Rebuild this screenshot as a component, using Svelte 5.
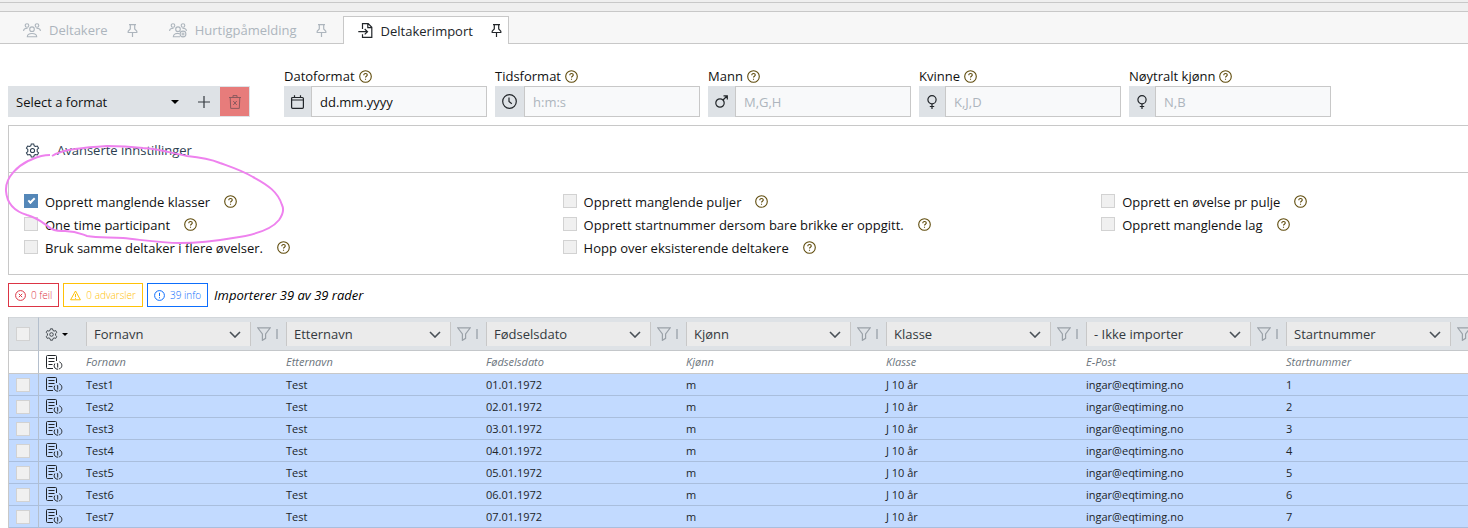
<script>
  const tabs = [
    { label: 'Deltakere', icon: 'people', active: false },
    { label: 'Hurtigpåmelding', icon: 'peoplePlus', active: false },
    { label: 'Deltakerimport', icon: 'import', active: true }
  ];

  const formats = [
    { id: 'date', label: 'Datoformat', icon: 'calendar', value: 'dd.mm.yyyy', hint: '' },
    { id: 'time', label: 'Tidsformat', icon: 'clock', value: '', hint: 'h:m:s' },
    { id: 'male', label: 'Mann', icon: 'male', value: '', hint: 'M,G,H' },
    { id: 'female', label: 'Kvinne', icon: 'female', value: '', hint: 'K,J,D' },
    { id: 'neutral', label: 'Nøytralt kjønn', icon: 'female', value: '', hint: 'N,B' }
  ];

  const optionColumns = [
    [
      { label: 'Opprett manglende klasser', checked: true },
      { label: 'One time participant', checked: false },
      { label: 'Bruk samme deltaker i flere øvelser.', checked: false }
    ],
    [
      { label: 'Opprett manglende puljer', checked: false },
      { label: 'Opprett startnummer dersom bare brikke er oppgitt.', checked: false },
      { label: 'Hopp over eksisterende deltakere', checked: false }
    ],
    [
      { label: 'Opprett en øvelse pr pulje', checked: false },
      { label: 'Opprett manglende lag', checked: false }
    ]
  ];

  const columns = [
    { select: 'Fornavn', source: 'Fornavn' },
    { select: 'Etternavn', source: 'Etternavn' },
    { select: 'Fødselsdato', source: 'Fødselsdato' },
    { select: 'Kjønn', source: 'Kjønn' },
    { select: 'Klasse', source: 'Klasse' },
    { select: '- Ikke importer', source: 'E-Post' },
    { select: 'Startnummer', source: 'Startnummer' },
    { select: '', source: '' }
  ];

  const rows = [1, 2, 3, 4, 5, 6, 7].map((n) => [
    `Test${n}`, 'Test', `0${n}.01.1972`, 'm', 'J 10 år', 'ingar@eqtiming.no', `${n}`, ''
  ]);
</script>

{#snippet pin()}
  <svg width="11" height="13" viewBox="0 0 11 13"><path d="M2 .7h7M3.300.7v4.200L1.200 7.200v1.300h8.600V7.200L7.700 4.900V.7M5.500 8.500V13" /></svg>
{/snippet}

{#snippet help()}
  <svg class="help" width="13" height="13" viewBox="0 0 13 13"><circle cx="6.500" cy="6.500" r="5.800" /><path d="M4.800 5.200c0-2.300 3.500-2.100 3.500-.1 0 1.200-1.800 1.200-1.800 2.500M6.500 8.700v1.100" /></svg>
{/snippet}

{#snippet gear(size)}
  <svg class="gear" width={size} height={size} viewBox="0 0 16 16"><circle cx="8" cy="8" r="2.200" /><path d="M6.700 1h2.600l.5 2 1.400.8 2-.6 1.300 2.300-1.500 1.400v2.200l1.500 1.400-1.300 2.300-2-.6-1.400.8-.5 2H6.700l-.5-2-1.400-.8-2 .6-1.300-2.300L3 9.100V6.900L1.500 5.500l1.300-2.300 2 .6L6.200 3z" /></svg>
{/snippet}

{#snippet report()}
  <svg class="report" width="17" height="15" viewBox="0 0 17 15">
    <path d="M7 13.500H1.500q-1 0-1-1v-11q0-1 1-1h8q1 0 1 1V6M2.500 3.500h6M2.500 6.500h6M2.500 9.500h4" />
    <path d="M8.800 8.600c-1.300 2-.6 4.900 2 5.500h1.400M13.300 6.800c3.300 1.300 3.500 6-.1 7.100M10.900 8.600h.8v4" />
  </svg>
{/snippet}

{#snippet icon(name)}
  {#if name === 'people' || name === 'peoplePlus'}
    <svg class="people" width="18" height="15" viewBox="0 0 18 15">
      <circle cx="4" cy="2.500" r="1.800" /><circle cx="14" cy="2.500" r="1.800" /><circle cx="9" cy="6.200" r="2.300" />
      <path d="M.6 8c0-2.200 1.700-2.700 4-2.700M17.400 8c0-2.200-1.700-2.700-4-2.700" />
      {#if name === 'people'}
        <path d="M4.300 13.800c0-4.400 9.400-4.400 9.400 0z" />
      {:else}
        <path d="M11 13.800H4.300c0-3 3.500-4 6.400-3.100" /><circle cx="14" cy="11" r="2.900" /><path d="M14 9.400v3.200M12.400 11h3.200" />
      {/if}
    </svg>
  {:else if name === 'import'}
    <svg width="15" height="15" viewBox="0 0 15 15"><path d="M4.500 6V.7h5.700l3.600 3.600v10H4.500v-3M9.800.7v4h4M.3 8.700h9M6.700 6l2.800 2.700-2.800 2.700" /></svg>
  {:else if name === 'calendar'}
    <svg width="13" height="14" viewBox="0 0 13 14"><rect x=".6" y="2.500" width="11.800" height="10.800" rx="1" /><path d="M.6 5h11.800M3.500.3v2.200M9.500.3v2.200" /></svg>
  {:else if name === 'clock'}
    <svg width="15" height="15" viewBox="0 0 15 15"><circle cx="7.500" cy="7.500" r="6.800" /><path d="M7 3.500v4l2.800 2.200" /></svg>
  {:else if name === 'male'}
    <svg width="13" height="13" viewBox="0 0 13 13"><circle cx="5" cy="8" r="4.200" /><path d="M8 5l4-4M8.500.8h3.800v3.700" /></svg>
  {:else}
    <svg width="12" height="14" viewBox="0 0 12 14"><circle cx="6" cy="4.800" r="4.100" /><path d="M6 8.900V14M3.800 11.500h4.400" /></svg>
  {/if}
{/snippet}

<main>
  <div class="strip"></div>
  <nav>
    {#each tabs as tab}
      <div class="tab" class:active={tab.active}>
        <a href="#{tab.icon}">{@render icon(tab.icon)}<span>{tab.label}</span></a>
        <button aria-label="Fest {tab.label}">{@render pin()}</button>
      </div>
    {/each}
  </nav>

  <section class="formats">
    <div class="picker">
      <select aria-label="Format"><option>Select a format</option></select>
      <svg class="caret" width="8" height="4" viewBox="0 0 8 4"><path d="M0 0h8L4 4z" /></svg>
      <button class="add" aria-label="Nytt format"><svg width="12" height="12" viewBox="0 0 12 12"><path d="M6 0v12M0 6h12" /></svg></button>
      <button class="remove" aria-label="Slett format"><svg width="12" height="14" viewBox="0 0 12 14"><path d="M0 2.500h12M4 2.500V.6h4v1.900M1.200 2.500l.5 10.900h8.600l.5-10.900M4.200 6l3.600 4M7.800 6l-3.600 4" /></svg></button>
    </div>
    <div class="fields">
      {#each formats as f}
        <div class="field">
          <div class="caption"><label for={f.id}>{f.label}</label>{@render help()}</div>
          <div class="group">
            <span class="addon">{@render icon(f.icon)}</span>
            <input id={f.id} type="text" value={f.value} placeholder={f.hint} />
          </div>
        </div>
      {/each}
    </div>
  </section>

  <section class="panel">
    <h2>{@render gear(15)}<span>Avanserte innstillinger</span></h2>
    <div class="options">
      {#each optionColumns as group}
        <div>
          {#each group as option}
            <div class="option">
              <label><input type="checkbox" checked={option.checked} /><span>{option.label}</span></label>
              {@render help()}
            </div>
          {/each}
        </div>
      {/each}
    </div>
    <svg class="marker" width="290" height="120" viewBox="0 130 290 120" aria-hidden="true">
      <path d="M50 155C38 155 34 159 28 161C20 165 5 176 6 191C7 206 17 212 27 215C38 218 43 223 49 227C54 232 60 231 65 231C76 231 79 233 87 236C98 238 110 237 123 238C143 240 160 243 180 243C200 243 216 241 233 238C255 235 271 230 279 220C284 213 284 209 282 205C278 192 268 185 253 177C241 170 231 167 220 163C208 158 198 157 187 156C171 153 160 149 143 148C125 146 118 146 107 146C91 147 82 148 75 149C65 150 57 153 52 156" />
    </svg>
  </section>

  <section class="status">
    <button class="error"><svg width="11" height="11" viewBox="0 0 11 11"><circle cx="5.500" cy="5.500" r="4.900" /><path d="M3.800 3.800l3.400 3.400M7.200 3.800L3.800 7.200" /></svg>0 feil</button>
    <button class="warning"><svg width="11" height="11" viewBox="0 0 11 11"><path d="M5.500 1L10.400 9.800H.6zM5.500 4v3M5.500 7.800v1" /></svg>0 advarsler</button>
    <button class="info"><svg width="11" height="11" viewBox="0 0 11 11"><circle cx="5.500" cy="5.500" r="4.900" /><path d="M5.500 2.800v3.300M5.500 7.200v1.100" /></svg>39 info</button>
    <em>Importerer 39 av 39 rader</em>
  </section>

  <div class="grid">
    <table>
      <colgroup>
        <col class="c-check" /><col class="c-tools" />
        {#each columns as _}<col class="c-data" />{/each}
      </colgroup>
      <thead>
        <tr>
          <th class="check"><input type="checkbox" aria-label="Velg alle" /></th>
          <th class="tools"><button aria-label="Kolonner">{@render gear(13)}<svg class="caret" width="6" height="3" viewBox="0 0 6 3"><path d="M0 0h6L3 3z" /></svg></button></th>
          {#each columns as c, i}
            <th>
              <div class="head">
                <div class="mapper">
                  <select aria-label="Felt for kolonne {i + 1}"><option>{c.select}</option></select>
                  <svg width="12" height="7" viewBox="0 0 12 7"><path d="M1 1l5 5 5-5" /></svg>
                </div>
                <button class="filter" aria-label="Filtrer"><svg width="14" height="14" viewBox="0 0 14 14"><path d="M.7.8h12.600L8.600 7v4.300L5.400 13.300V7z" /></svg></button>
                <i></i>
              </div>
            </th>
          {/each}
        </tr>
      </thead>
      <tbody>
        <tr class="source">
          <td class="check"></td>
          <td class="tools">{@render report()}</td>
          {#each columns as c}<td>{c.source}</td>{/each}
        </tr>
        {#each rows as row}
          <tr>
            <td class="check"><input type="checkbox" aria-label="Velg {row[0]}" /></td>
            <td class="tools">{@render report()}</td>
            {#each row as cell}<td>{cell}</td>{/each}
          </tr>
        {/each}
      </tbody>
    </table>
  </div>
</main>

<style>
  :global(body) { background: #fff; }
  main, button, input, select {
    font-family: 'Segoe UI', 'Open Sans', 'Noto Sans', sans-serif;
    font-size: 13px;
    color: #111;
  }
  main { overflow: hidden; line-height: 20px; }
  main * { box-sizing: border-box; }
  svg { display: block; flex: none; fill: none; stroke: currentColor; stroke-width: 1.2; }
  button { display: flex; align-items: center; justify-content: center; padding: 0; border: 0; border-radius: 0; background: none; }
  select { appearance: none; border: 0; border-radius: 0; background: transparent; outline: 0; }
  .caret { fill: #000; stroke: none; }
  .help { color: #5f4b0b; stroke-width: 1.1; }
  .gear { stroke-width: 1.1; }
  .people { stroke-width: 1.1; }

  .strip { height: 12px; background: #efefef; border-bottom: 1px solid #c8c8c8; }
  .strip::before { content: ''; display: block; height: 2px; border-bottom: 1px solid #c8c8c8; }

  nav { display: flex; align-items: flex-end; height: 32px; padding-left: 8px; background: #f7f7f7; box-shadow: inset 0 -1px #c8c8c8; }
  .tab { display: flex; align-items: center; gap: 19px; height: 28px; padding: 0 16px 0 15px; color: #adb5bd; }
  .tab a { display: flex; align-items: center; gap: 8px; color: inherit; text-decoration: none; }
  .tab button { color: inherit; }
  .tab.active { gap: 18px; background: #fff; border: 1px solid #c8c8c8; border-bottom: 0; padding: 0 6px 0 14px; color: #212529; }

  .formats { display: flex; align-items: flex-end; gap: 34px; padding: 22px 8px 8px; }
  .picker { display: grid; grid-template-columns: 180px 31px 31px; height: 31px; background: #dee2e6; }
  .picker select { grid-area: 1 / 1; padding: 0 8px; }
  .picker .caret { grid-area: 1 / 1; place-self: center end; margin-right: 9px; pointer-events: none; }
  .add { color: #343a40; }
  .remove { margin: 1px; background: #e77c7b; color: #8c5a5e; }
  .remove svg { stroke-width: 1; }
  .fields { display: flex; gap: 8px; }
  .caption { display: flex; align-items: center; gap: 4px; }
  .group { display: flex; height: 31px; }
  .addon { display: flex; align-items: center; padding: 0 7px; background: #dee2e6; color: #212529; }
  .group input { width: 176px; border: 1px solid #c8c8c8; border-radius: 0; background: #f8f9fa; padding: 0 8px; outline: 0; }
  .group input::placeholder { color: #adb5bd; }

  .panel { position: relative; margin-left: 8px; border: 1px solid #c8c8c8; border-right: 0; }
  h2 { display: flex; align-items: center; gap: 17px; margin: 0; height: 47px; padding: 2px 16px 0; border-bottom: 1px solid #c8c8c8; font-size: 13px; font-weight: 400; color: #2c3e50; }
  .options { display: grid; grid-template-columns: 373fr 373fr 254fr; padding: 17px 0 15px 15px; }
  .option { display: flex; align-items: center; gap: 14px; height: 23px; }
  .option label { display: flex; align-items: center; gap: 7px; white-space: nowrap; }
  input[type='checkbox'] { appearance: none; flex: none; width: 14px; height: 14px; margin: 0; border: 1px solid #d2d2d2; border-radius: 0; background: #f0f0f0; }
  .option input { margin-bottom: 2px; }
  .option input:checked { border-color: #5487b8; background: #5487b8; display: grid; place-items: center; }
  .option input:checked::before { content: ''; width: 5px; height: 2px; margin-bottom: 2px; border: solid #fff; border-width: 0 0 2px 2px; transform: rotate(-45deg); }
  .marker { position: absolute; left: -9px; top: 4px; pointer-events: none; stroke: #ee82ee; stroke-width: 2; }

  .status { display: flex; align-items: center; gap: 4px; padding: 8px 8px 10px; }
  .status button { gap: 5px; height: 24px; padding: 0 6px; border: 1px solid; font-size: 10px; font-weight: 300; }
  .status svg { stroke-width: 1; }
  .status em { margin-left: 2px; color: #000; }
  .status .error { color: #dc3545; }
  .status .warning { color: #ffc107; }
  .status .info { color: #0d6efd; }

  .grid { margin-left: 8px; overflow: hidden; }
  table { width: 1670px; table-layout: fixed; border-collapse: separate; border-spacing: 0; border-left: 1px solid #c8c8c8; }
  .c-check { width: 30px; }
  .c-tools { width: 39px; }
  .c-data { width: 200px; }
  th { height: 34px; padding: 0 0 0 8px; background: #dee2e6; border-top: 1px solid #d2d6da; border-bottom: 1px solid #c4c7ca; font-weight: 400; }
  td { height: 22px; padding: 0 8px; background: #c2daff; border-bottom: 1px solid #a9bedd; font-size: 11px; line-height: 20px; color: #212529; }
  .check { padding: 0 0 0 7px; border-right: 1px solid #b4bfcd; }
  .check input { display: block; }
  .tools { padding: 0 0 0 7px; }
  th.tools { padding-left: 6px; }
  .tools button { gap: 4px; color: #343a40; }
  .report { color: #212529; stroke-width: 1; }
  .source td { height: 23px; background: #fff; border-bottom-color: #c8c8c8; font-style: italic; color: #6c757d; }
  .head { display: flex; align-items: center; }
  .mapper { display: grid; width: 165px; height: 24px; background: #ebebeb; border: solid #c8c8c8; border-width: 0 1px; }
  .mapper select { grid-area: 1 / 1; padding: 0 7px; color: #343a40; }
  .mapper svg { grid-area: 1 / 1; place-self: center end; margin-right: 9px; color: #495057; stroke-width: 1.6; pointer-events: none; }
  .filter { margin: 0 5px 0 6px; color: #9aa1a8; }
  .head i { width: 2px; height: 10px; background: #b0b7be; }
</style>
